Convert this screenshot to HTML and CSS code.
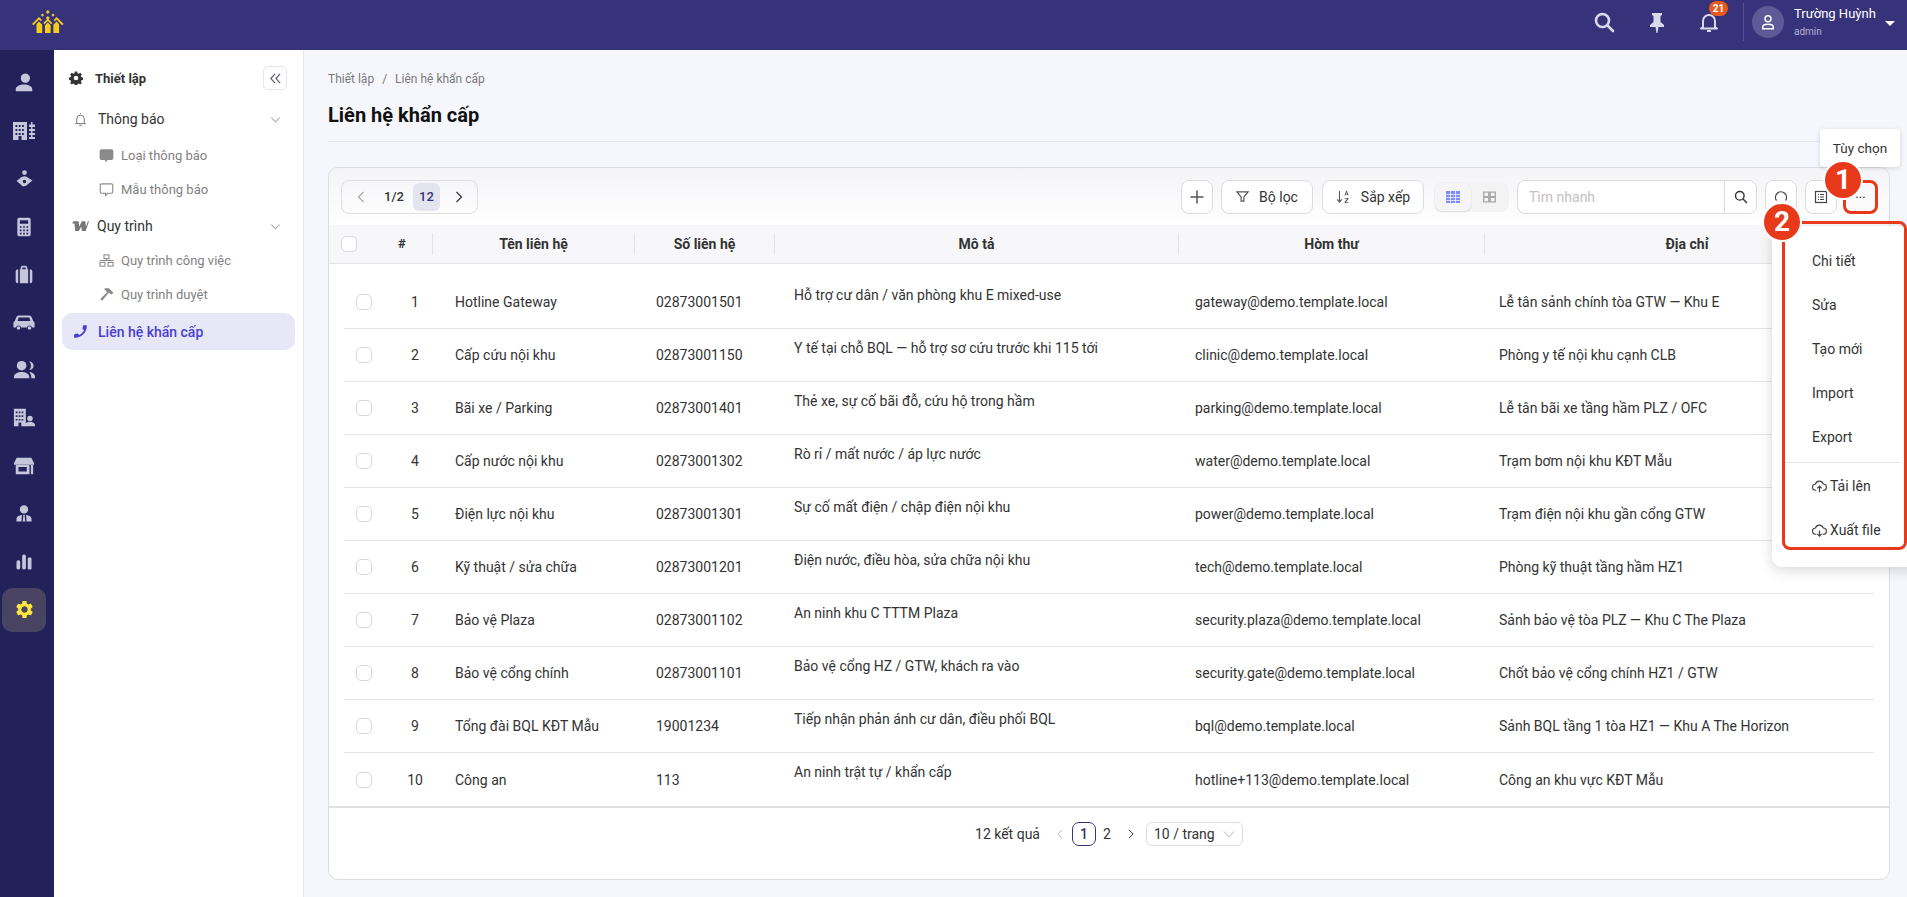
FILE: index.html
```html
<!DOCTYPE html>
<html lang="vi">
<head>
    <meta charset="UTF-8">
    <meta name="viewport" content="width=device-width, initial-scale=1.0">
    <title>Liên hệ khẩn cấp</title>
    <link rel="stylesheet" href="styles.css">
</head>
<body>

<header class="topbar">
    <svg class="logo" viewBox="0 0 32 24" width="32" height="24" fill="#f6cc1c">
        <path d="M15.800 0l2 2-2 2-2-2zM10.500 3.500l1.600 1.600-1.600 1.600-1.600-1.600zM21 3.500l1.600 1.600L21 6.700l-1.600-1.600zM15.800 6l2 2-2 2-2-2z"/>
        <path d="M0 14L7 7l3 3-1.200 1.200L7 9.500 1.500 15.200zM31.600 14l-7-7-3 3 1.200 1.200 1.800-1.700 5.500 5.700zM15.800 8.500l-4.500 4.500 1.200 1.200 3.300-3.200 3.300 3.200 1.200-1.200z"/>
        <path d="M7 11.500l3.200 3.200V23H4.500v-8.800zM24.600 11.500l2.500 2.700V23h-5.700v-8.300zM15.800 12.500l2.800 2.800V23h-5.600v-7.700z"/>
    </svg>
    <div class="topbar-right">
        <svg class="top-icon top-search" viewBox="0 0 24 24" width="24" height="24" fill="none" stroke="#d9d9ea" stroke-width="2.600"><circle cx="10.500" cy="10.500" r="6.500"/><path d="M15.500 15.500L21 21" stroke-linecap="round"/></svg>
        <svg class="top-icon" viewBox="0 0 24 24" width="24" height="24" fill="#d9d9ea"><path d="M7 3h10v2l-1.500 1v6l3.500 3v2h-5.500l-1 6h-1l-1-6H5v-2l3.500-3V6L7 5z"/></svg>
        <div class="bell">
            <svg viewBox="0 0 24 24" width="24" height="24" fill="none" stroke="#d9d9ea" stroke-width="2"><path d="M6 17V11a6 6 0 0 1 12 0v6l2 1.500H4zM10 21h4" stroke-linejoin="round"/></svg>
            <span class="bell-count">21</span>
        </div>
        <div class="top-divider"></div>
        <div class="avatar">
            <svg viewBox="0 0 24 24" width="18" height="18" fill="none" stroke="#fff" stroke-width="2"><circle cx="12" cy="7.500" r="4"/><path d="M5 21v-2.500c0-2 2-3.500 7-3.500s7 1.500 7 3.500V21z"/></svg>
        </div>
        <div class="user">
            <div class="user-name">Trường Huỳnh</div>
            <div class="user-role">admin</div>
        </div>
        <span class="user-caret"></span>
    </div>
</header>

<div class="layout">
    <nav class="rail">
        <div class="rail-item"><svg viewBox="0 0 24 24" width="22" height="22"><path d="M12 11.500a5 5 0 1 0 0-9.500 5 5 0 0 0 0 9.500zM12 13.500c-4.500 0-9 2-9 5V21h18v-2.500c0-3-4.500-5-9-5z"/></svg></div>
        <div class="rail-item"><svg viewBox="0 0 24 24" width="24" height="24"><path fill-rule="evenodd" d="M1 3h14v18H9.500v-4h-3v4H1zM3.500 6v2h1.800V6zm3.300 0v2h1.800V6zm3.200 0v2h1.800V6zM3.500 10v2h1.800v-2zm3.300 0v2h1.800v-2zm3.200 0v2h1.800v-2zM3.500 14v2h1.800v-2zm3.300 0v2h1.800v-2zm3.200 0v2h1.800v-2z"/><path d="M19 3h1.500v2.500h2.500V8h-2.500v2H23v2h-2.500v2H23v2h-2.500v2H23v2h-6v-2h2v-2h-2v-2h2v-2h-2v-2h2V8h-2V5.500h2z"/></svg></div>
        <div class="rail-item"><svg viewBox="0 0 24 24" width="19" height="19"><circle cx="12" cy="4.500" r="3"/><path fill-rule="evenodd" d="M12 9c2 0 3.500 1 4.500 2L22 14.500 14 21l-4 1-8-7 5-4c1-1 3-2 5-2zm0 4.500a2.200 2.200 0 1 0 0 4.400 2.200 2.200 0 0 0 0-4.400z"/></svg></div>
        <div class="rail-item"><svg viewBox="0 0 24 24" width="20" height="20"><path fill-rule="evenodd" d="M6 1h12a2 2 0 0 1 2 2v18a2 2 0 0 1-2 2H6a2 2 0 0 1-2-2V3a2 2 0 0 1 2-2zm1 3v4h10V4zm0 7v2h2v-2zm4 0v2h2v-2zm4 0v2h2v-2zm-8 4v2h2v-2zm4 0v2h2v-2zm4 0v2h2v-2zm-8 4v2h2v-2zm4 0v2h2v-2zm4 0v2h2v-2z"/></svg></div>
        <div class="rail-item"><svg viewBox="0 0 24 24" width="20" height="20"><path fill-rule="evenodd" d="M8 5V3.500A2.500 2.500 0 0 1 10.500 1h3A2.500 2.500 0 0 1 16 3.500V5h1v17H7V5zm2 0h4V3.500a.5.5 0 0 0-.5-.5h-3a.5.5 0 0 0-.5.500zM2 8a3 3 0 0 1 3-3v17a3 3 0 0 1-3-3zM19 5a3 3 0 0 1 3 3v11a3 3 0 0 1-3 3z"/></svg></div>
        <div class="rail-item"><svg viewBox="0 0 24 24" width="22" height="22"><path fill-rule="evenodd" d="M6 5h12c1 0 2 1 2.500 2l1.500 4c1 .5 1.500 1.500 1.500 2.500V18h-2.600a3 3 0 0 0-5.800 0H8.900a3 3 0 0 0-5.800 0H.5v-4.500c0-1 .5-2 1.500-2.500l1.500-4C4 6 5 5 6 5zm.2 2.200L5 11h14l-1.200-3.800z"/><circle cx="6" cy="18.500" r="2"/><circle cx="18" cy="18.500" r="2"/></svg></div>
        <div class="rail-item"><svg viewBox="0 0 24 24" width="23" height="23"><circle cx="9" cy="7" r="5"/><path d="M17 2.500a4.500 4.500 0 0 1 0 9 6.500 6.500 0 0 0 0-9zM9 13.500c-4 0-8 2-8 5V20h16v-1.500c0-3-4-5-8-5zM17 13.500c4 .5 6 2.500 6 5V20h-4v-2c0-1.500-1-3-2-4.500z"/></svg></div>
        <div class="rail-item"><svg viewBox="0 0 24 24" width="22" height="22"><path fill-rule="evenodd" d="M1 2h13v19H9v-4H6v4H1zM3 5v1.800h1.800V5zm3.200 0v1.800H8V5zm3.200 0v1.800h1.800V5zM3 9v1.800h1.800V9zm3.200 0v1.800H8V9zm3.200 0v1.800h1.800V9zM3 13v1.800h1.800V13zm3.200 0v1.800H8V13zm3.200 0v1.800h1.800V13z"/><circle cx="18.500" cy="12.500" r="3"/><path d="M13 21v-1.500c0-2 2.500-3.500 5.500-3.500s5.500 1.500 5.500 3.500V21z"/></svg></div>
        <div class="rail-item"><svg viewBox="0 0 24 24" width="22" height="22"><path fill-rule="evenodd" d="M4 3h16l3 6v1.500H1V9zM3 11h15v10H3zm3 2v5h9v-5zM19.500 11H22v10h-2.500z"/></svg></div>
        <div class="rail-item"><svg viewBox="0 0 24 24" width="20" height="20"><circle cx="12" cy="6.500" r="5"/><path d="M10.800 13h2.400l-.4 2 .8 6h-3.200l.8-6zM9.500 13.200L9 21H3v-3.500c0-2 2.500-3.800 6.500-4.300zM14.500 13.200c4 .5 6.500 2.300 6.500 4.300V21h-6z"/></svg></div>
        <div class="rail-item"><svg viewBox="0 0 24 24" width="20" height="20"><rect x="3" y="10" width="4.500" height="11" rx="2"/><rect x="9.800" y="3" width="4.500" height="18" rx="2"/><rect x="16.500" y="6.500" width="4.500" height="14.500" rx="1.500"/></svg></div>
        <div class="rail-item rail-item-active"><svg viewBox="0 0 24 24" width="21" height="21"><path d="M19.140 12.940c.04-.3.060-.610.060-.940 0-.320-.020-.640-.070-.940l2.030-1.580c.18-.14.230-.410.120-.610l-1.920-3.320c-.12-.220-.370-.290-.590-.220l-2.390.960c-.5-.380-1.030-.7-1.620-.940l-.360-2.540c-.040-.240-.240-.410-.480-.410h-3.840c-.240 0-.430.170-.470.410l-.360 2.540c-.590.240-1.130.570-1.620.940l-2.390-.960c-.220-.080-.470 0-.590.220L2.740 8.870c-.120.210-.080.470.120.610l2.030 1.580c-.050.3-.090.630-.090.940s.020.640.070.940l-2.030 1.580c-.18.140-.230.410-.12.610l1.920 3.320c.12.220.370.290.590.220l2.390-.960c.5.380 1.030.7 1.620.940l.360 2.540c.050.240.240.410.480.410h3.840c.240 0 .440-.17.470-.41l.360-2.540c.590-.240 1.130-.560 1.620-.940l2.390.960c.220.080.470 0 .590-.220l1.920-3.320c.12-.220.070-.470-.12-.61l-2.010-1.580zM12 15.600c-1.980 0-3.600-1.620-3.600-3.600s1.620-3.600 3.600-3.600 3.600 1.620 3.600 3.600-1.620 3.600-3.600 3.600z"/></svg></div>
    </nav>

    <aside class="sidebar">
        <div class="side-head">
            <svg viewBox="0 0 24 24" width="14" height="14" fill="#333"><path fill-rule="evenodd" d="M10 1h4l.6 3 2 .9 2.600-1.700 2.800 2.800-1.700 2.600.9 2 3 .6v4l-3 .6-.9 2 1.700 2.600-2.800 2.800-2.600-1.700-2 .9-.6 3h-4l-.6-3-2-.9-2.600 1.700-2.800-2.800 1.700-2.600-.9-2-3-.6v-4l3-.6.9-2-1.700-2.600 2.800-2.800 2.600 1.700 2-.9zm2 7a4 4 0 1 0 0 8 4 4 0 0 0 0-8z"/></svg>
            <span class="side-title">Thiết lập</span>
            <button class="collapse-btn">
                <svg viewBox="0 0 14 14" width="13" height="13" fill="none" stroke="#5d5d7a" stroke-width="1.300"><path d="M6.500 2L2 7l4.500 5M12 2L7.500 7l4.500 5"/></svg>
            </button>
        </div>

        <div class="side-group">
            <svg viewBox="0 0 24 24" width="15" height="15" fill="none" stroke="#777" stroke-width="1.600"><path d="M6 17v-6a6 6 0 0 1 12 0v6l2 1.500H4zM10 21.500h4M12 3V1.500"/></svg>
            <span>Thông báo</span>
            <svg class="chev" viewBox="0 0 12 12" width="11" height="11" fill="none" stroke="#a8a8a8" stroke-width="1.100"><path d="M1.500 4l4.500 4.500L10.500 4"/></svg>
        </div>
        <div class="side-sub side-sub-first">
            <svg viewBox="0 0 24 24" width="15" height="15" fill="#8a8a8a"><path d="M4 2h16a3 3 0 0 1 3 3v11a3 3 0 0 1-3 3h-6l-4 4v-4H4a3 3 0 0 1-3-3V5a3 3 0 0 1 3-3z"/></svg>
            <span>Loại thông báo</span>
        </div>
        <div class="side-sub">
            <svg viewBox="0 0 24 24" width="15" height="15" fill="none" stroke="#8a8a8a" stroke-width="1.800"><path d="M4 3h16a2 2 0 0 1 2 2v11a2 2 0 0 1-2 2h-6l-3.500 3.500V18H4a2 2 0 0 1-2-2V5a2 2 0 0 1 2-2z"/></svg>
            <span>Mẫu thông báo</span>
        </div>

        <div class="side-group side-group-next">
            <svg viewBox="0 0 24 16" width="18" height="12" fill="#777"><path d="M3 1.500h7l1 7 3.500-7H19l1 7 2.500-7H24l-4.500 13h-5l-.8-6-3.200 6H5.500L4.700 4.500H1.500z"/></svg>
            <span>Quy trình</span>
            <svg class="chev" viewBox="0 0 12 12" width="11" height="11" fill="none" stroke="#a8a8a8" stroke-width="1.100"><path d="M1.500 4l4.500 4.500L10.500 4"/></svg>
        </div>
        <div class="side-sub side-sub-second">
            <svg viewBox="0 0 24 24" width="15" height="15" fill="none" stroke="#8a8a8a" stroke-width="1.700"><rect x="8" y="3" width="8" height="6"/><rect x="1.500" y="15" width="8" height="6"/><rect x="14.500" y="15" width="8" height="6"/><path d="M12 9v3M1 12h22"/></svg>
            <span>Quy trình công việc</span>
        </div>
        <div class="side-sub">
            <svg viewBox="0 0 24 24" width="15" height="15" fill="#8a8a8a"><path d="M9 2h7l7 7-3 3-4-3-2 2L5 22l-3-3L13 8.500 9 4z"/></svg>
            <span>Quy trình duyệt</span>
        </div>

        <div class="side-active">
            <svg viewBox="0 0 24 24" width="17" height="17" fill="#4a3fd0"><path transform="matrix(-1 0 0 1 24 0)" d="M20.010 15.380c-1.230 0-2.420-.2-3.530-.560a.977.977 0 0 0-1.010.240l-1.570 1.970c-2.830-1.350-5.480-3.900-6.890-6.830l1.950-1.660c.27-.280.350-.670.240-1.020-.370-1.110-.560-2.300-.560-3.530 0-.540-.450-.990-.990-.990H4.190C3.650 3 3 3.240 3 3.990 3 13.280 10.730 21 20.010 21c.71 0 .990-.630.990-1.180v-3.450c0-.540-.450-.990-.990-.990z"/></svg>
            <span>Liên hệ khẩn cấp</span>
        </div>
    </aside>

    <main class="content">
        <div class="breadcrumb">
            <span>Thiết lập</span><span class="crumb-sep">/</span><span>Liên hệ khẩn cấp</span>
        </div>
        <h1 class="page-title">Liên hệ khẩn cấp</h1>

        <section class="card">
            <div class="toolbar">
                <div class="pager-box">
                    <svg viewBox="0 0 12 12" width="12" height="12" fill="none" stroke="#aaa" stroke-width="1.200"><path d="M8.500 1L3.500 6l5 5"/></svg>
                    <span class="pager-count">1/2</span>
                    <span class="pager-total">12</span>
                    <svg viewBox="0 0 12 12" width="12" height="12" fill="none" stroke="#333" stroke-width="1.200"><path d="M3.500 1l5 5-5 5"/></svg>
                </div>

                <div class="tools">
                    <button class="tool-btn tool-square">
                        <svg viewBox="0 0 14 14" width="14" height="14" fill="none" stroke="#555" stroke-width="1.500"><path d="M7 .5v13M.5 7h13"/></svg>
                    </button>
                    <button class="tool-btn tool-filter">
                        <svg viewBox="0 0 14 14" width="13" height="13" fill="none" stroke="#555" stroke-width="1.300"><path d="M1 2h12L8.500 7.500V12h-3V7.500z"/></svg>
                        <span>Bộ lọc</span>
                    </button>
                    <button class="tool-btn tool-sort">
                        <svg viewBox="0 0 14 14" width="14" height="14" fill="#555"><path d="M3 1h1v9.500l1.500-1.500.7.700L3.500 13 .8 9.700 1.500 9 3 10.500zM8.500 5.500L10 1h1l1.500 4.500h-1l-.3-1H9.800l-.3 1zM10 3.700h1L10.500 2zM8.700 8h3.800v.8l-2.600 3.400h2.600v.8H8.500v-.8l2.600-3.400H8.700z"/></svg>
                        <span>Sắp xếp</span>
                    </button>
                    <div class="view-toggle">
                        <span class="view-on">
                            <svg viewBox="0 0 14 12" width="14" height="12"><rect width="14" height="12" fill="#7d8df5"/><path d="M0 3.500h14M0 6.500h14M0 9.500h14M4.500 0v12M9.500 0v12" stroke="#fff" stroke-width=".7"/></svg>
                        </span>
                        <span class="view-off">
                            <svg viewBox="0 0 14 12" width="13" height="12" fill="#aaa"><path fill-rule="evenodd" d="M0 0h14v12H0zm1.500 1.500v3.500h4V1.500zm7 0v3.500h4V1.500zm-7 5.500v3.500h4V7zm7 0v3.500h4V7z"/></svg>
                        </span>
                    </div>
                    <div class="quick-search">
                        <span class="quick-input">Tìm nhanh</span>
                        <span class="quick-btn">
                            <svg viewBox="0 0 14 14" width="14" height="14" fill="none" stroke="#333" stroke-width="1.400"><circle cx="5.800" cy="5.800" r="4.300"/><path d="M9 9l4 4"/></svg>
                        </span>
                    </div>
                    <button class="tool-btn tool-square">
                        <svg viewBox="0 0 14 14" width="14" height="14" fill="none" stroke="#444" stroke-width="1.300"><path d="M2.500 10.500A5.500 5.500 0 1 1 11.500 10.500"/></svg>
                    </button>
                    <button class="tool-btn tool-square">
                        <svg viewBox="0 0 14 14" width="14" height="14" fill="none" stroke="#444" stroke-width="1.200"><rect x="1.500" y="1.500" width="11" height="11"/><path d="M4 4.500h1M6 4.500h4M4 7h1M6 7h4M4 9.500h1M6 9.500h4"/></svg>
                    </button>
                    <button class="tool-btn tool-more">...</button>
                </div>
            </div>

            <div class="thead">
                <div class="th th-check"><span class="check"></span><span class="th-hash">#</span></div>
                <div class="th">Tên liên hệ</div>
                <div class="th">Số liên hệ</div>
                <div class="th">Mô tả</div>
                <div class="th">Hòm thư</div>
                <div class="th">Địa chỉ</div>
            </div>

            <div class="tbody">
                <div class="tr">
                    <div class="td-check"><span class="check"></span><span class="td-no">1</span></div>
                    <div class="td">Hotline Gateway</div>
                    <div class="td">02873001501</div>
                    <div class="td td-desc">Hỗ trợ cư dân / văn phòng khu E mixed-use</div>
                    <div class="td">gateway@demo.template.local</div>
                    <div class="td">Lễ tân sảnh chính tòa GTW — Khu E</div>
                </div>
                <div class="tr">
                    <div class="td-check"><span class="check"></span><span class="td-no">2</span></div>
                    <div class="td">Cấp cứu nội khu</div>
                    <div class="td">02873001150</div>
                    <div class="td td-desc">Y tế tại chỗ BQL — hỗ trợ sơ cứu trước khi 115 tới</div>
                    <div class="td">clinic@demo.template.local</div>
                    <div class="td">Phòng y tế nội khu cạnh CLB</div>
                </div>
                <div class="tr">
                    <div class="td-check"><span class="check"></span><span class="td-no">3</span></div>
                    <div class="td">Bãi xe / Parking</div>
                    <div class="td">02873001401</div>
                    <div class="td td-desc">Thẻ xe, sự cố bãi đỗ, cứu hộ trong hầm</div>
                    <div class="td">parking@demo.template.local</div>
                    <div class="td">Lễ tân bãi xe tầng hầm PLZ / OFC</div>
                </div>
                <div class="tr">
                    <div class="td-check"><span class="check"></span><span class="td-no">4</span></div>
                    <div class="td">Cấp nước nội khu</div>
                    <div class="td">02873001302</div>
                    <div class="td td-desc">Rò rỉ / mất nước / áp lực nước</div>
                    <div class="td">water@demo.template.local</div>
                    <div class="td">Trạm bơm nội khu KĐT Mẫu</div>
                </div>
                <div class="tr">
                    <div class="td-check"><span class="check"></span><span class="td-no">5</span></div>
                    <div class="td">Điện lực nội khu</div>
                    <div class="td">02873001301</div>
                    <div class="td td-desc">Sự cố mất điện / chập điện nội khu</div>
                    <div class="td">power@demo.template.local</div>
                    <div class="td">Trạm điện nội khu gần cổng GTW</div>
                </div>
                <div class="tr">
                    <div class="td-check"><span class="check"></span><span class="td-no">6</span></div>
                    <div class="td">Kỹ thuật / sửa chữa</div>
                    <div class="td">02873001201</div>
                    <div class="td td-desc">Điện nước, điều hòa, sửa chữa nội khu</div>
                    <div class="td">tech@demo.template.local</div>
                    <div class="td">Phòng kỹ thuật tầng hầm HZ1</div>
                </div>
                <div class="tr">
                    <div class="td-check"><span class="check"></span><span class="td-no">7</span></div>
                    <div class="td">Bảo vệ Plaza</div>
                    <div class="td">02873001102</div>
                    <div class="td td-desc">An ninh khu C TTTM Plaza</div>
                    <div class="td">security.plaza@demo.template.local</div>
                    <div class="td">Sảnh bảo vệ tòa PLZ — Khu C The Plaza</div>
                </div>
                <div class="tr">
                    <div class="td-check"><span class="check"></span><span class="td-no">8</span></div>
                    <div class="td">Bảo vệ cổng chính</div>
                    <div class="td">02873001101</div>
                    <div class="td td-desc">Bảo vệ cổng HZ / GTW, khách ra vào</div>
                    <div class="td">security.gate@demo.template.local</div>
                    <div class="td">Chốt bảo vệ cổng chính HZ1 / GTW</div>
                </div>
                <div class="tr">
                    <div class="td-check"><span class="check"></span><span class="td-no">9</span></div>
                    <div class="td">Tổng đài BQL KĐT Mẫu</div>
                    <div class="td">19001234</div>
                    <div class="td td-desc">Tiếp nhận phản ánh cư dân, điều phối BQL</div>
                    <div class="td">bql@demo.template.local</div>
                    <div class="td">Sảnh BQL tầng 1 tòa HZ1 — Khu A The Horizon</div>
                </div>
                <div class="tr">
                    <div class="td-check"><span class="check"></span><span class="td-no">10</span></div>
                    <div class="td">Công an</div>
                    <div class="td">113</div>
                    <div class="td td-desc">An ninh trật tự / khẩn cấp</div>
                    <div class="td">hotline+113@demo.template.local</div>
                    <div class="td">Công an khu vực KĐT Mẫu</div>
                </div>
            </div>

            <div class="pagination">
                <span class="page-total">12 kết quả</span>
                <svg viewBox="0 0 12 12" width="10" height="10" fill="none" stroke="#bbb" stroke-width="1.200"><path d="M8.500 1L3.500 6l5 5"/></svg>
                <span class="page-num page-num-on">1</span>
                <span class="page-num page-num-two">2</span>
                <svg class="page-next" viewBox="0 0 12 12" width="10" height="10" fill="none" stroke="#333" stroke-width="1.200"><path d="M3.500 1l5 5-5 5"/></svg>
                <span class="page-size">10 / trang
                    <svg viewBox="0 0 12 12" width="12" height="12" fill="none" stroke="#bbb" stroke-width="1"><path d="M1 3.500l5 5.500 5-5.500"/></svg>
                </span>
            </div>
        </section>
    </main>
</div>

<!-- tooltip, menu va chu thich nam de len bang -->
<div class="tooltip">Tùy chọn</div>

<div class="menu">
    <div class="menu-item">Chi tiết</div>
    <div class="menu-item">Sửa</div>
    <div class="menu-item">Tạo mới</div>
    <div class="menu-item">Import</div>
    <div class="menu-item">Export</div>
    <div class="menu-line"></div>
    <div class="menu-item menu-item-icon">
        <svg viewBox="0 0 24 24" width="15" height="15" fill="none" stroke="#444" stroke-width="1.900"><path d="M7 18H6a5 5 0 0 1-.5-10A6.500 6.500 0 0 1 18 8a5 5 0 0 1 0 10h-1M12 21v-9M8.500 15l3.500-3.500 3.500 3.500"/></svg>
        <span>Tải lên</span>
    </div>
    <div class="menu-item menu-item-icon">
        <svg viewBox="0 0 24 24" width="15" height="15" fill="none" stroke="#444" stroke-width="1.900"><path d="M7 18H6a5 5 0 0 1-.5-10A6.500 6.500 0 0 1 18 8a5 5 0 0 1 0 10h-1M12 12v9M8.500 17.500l3.500 3.500 3.500-3.500"/></svg>
        <span>Xuất file</span>
    </div>
</div>

<div class="mark mark-more"></div>
<div class="mark mark-menu"></div>
<div class="step step-one">1</div>
<div class="step step-two">2</div>

</body>
</html>
```

FILE: styles.css
```css
* {
    box-sizing: border-box;
}
html,
body {
    height: 100%;
}
body {
    margin: 0;
    position: relative;
    overflow: hidden;
    font-family: Roboto, "Liberation Sans", sans-serif;
    font-size: 14px;
    color: #333;
    background-color: #f6f7fc;
}
button {
    font-family: inherit;
    font-size: 14px;
    color: #333;
    cursor: pointer;
}

/* thanh tren cung */
.topbar {
    height: 50px;
    display: flex;
    align-items: center;
    padding-left: 32px;
    background-color: #37337b;
}
.logo {
    margin-top: -6px;
}
.topbar-right {
    margin-left: auto;
    display: flex;
    align-items: center;
    height: 100%;
    padding-right: 12px;
}
.top-icon {
    margin-right: 28px;
    margin-top: -7px;
}
.top-search {
    margin-right: 29px;
}
.bell {
    position: relative;
    height: 24px;
    margin-top: -7px;
    margin-right: 22px;
}
.bell-count {
    position: absolute;
    top: -9px;
    left: 12px;
    width: 19px;
    height: 15px;
    border-radius: 8px;
    background-color: #e8591e;
    color: #fff;
    font-size: 10px;
    font-weight: 700;
    line-height: 15px;
    text-align: center;
}
.top-divider {
    width: 1px;
    height: 38px;
    margin-top: -6px;
    margin-right: 8px;
    background-color: #56528f;
}
.avatar {
    width: 32px;
    height: 32px;
    margin-top: -6px;
    margin-right: 10px;
    border-radius: 50%;
    background-color: #5d5a97;
    display: flex;
    align-items: center;
    justify-content: center;
}
.user {
    width: 91px;
    margin-top: -6px;
}
.user-name {
    color: #fff;
    font-size: 13px;
    line-height: 14px;
}
.user-role {
    margin-top: 5px;
    color: #b4b2d2;
    font-size: 10px;
    line-height: 12px;
}
.user-caret {
    margin-top: -4px;
    border-left: 5px solid transparent;
    border-right: 5px solid transparent;
    border-top: 5px solid #fff;
}

/* khung chinh */
.layout {
    display: flex;
    height: 847px;
}
.rail {
    width: 54px;
    flex: none;
    padding-top: 11px;
    background-color: #23215a;
}
.rail-item {
    width: 44px;
    height: 44px;
    margin: 0 0 3.900px 2px;
    display: flex;
    align-items: center;
    justify-content: center;
    border-radius: 10px;
    fill: #c6c6db;
}
.rail-item-active {
    background-color: #474360;
    fill: #fbe73f;
}

/* cot menu */
.sidebar {
    width: 250px;
    flex: none;
    padding: 16px 8px 0;
    background-color: #fff;
    border-right: 1px solid #e8e8ef;
}
.side-head {
    display: flex;
    align-items: center;
    height: 24px;
    padding-left: 7px;
    padding-right: 8px;
}
.side-title {
    margin-left: 12px;
    font-size: 13px;
    font-weight: 700;
    color: #333;
}
.collapse-btn {
    margin-left: auto;
    width: 24px;
    height: 24px;
    padding: 0;
    display: flex;
    align-items: center;
    justify-content: center;
    background-color: #fff;
    border: 1px solid #e6e6ea;
    border-radius: 5px;
}
.side-group {
    display: flex;
    align-items: center;
    gap: 10px;
    height: 24px;
    margin-top: 17px;
    padding-left: 10px;
    padding-right: 14px;
    color: #333;
}
.side-group svg:first-child {
    margin-left: 1px;
}
.side-group-next {
    margin-top: 8px;
    gap: 8px;
}
.side-group-next svg:first-child {
    margin-left: -1px;
}
.chev {
    margin-left: auto;
}
.side-sub {
    display: flex;
    align-items: center;
    gap: 7px;
    height: 34px;
    padding-left: 37px;
    font-size: 13px;
    color: #7f7f7f;
}
.side-sub-first {
    margin-top: 7px;
}
.side-sub-second {
    margin-top: 5px;
}
.side-active {
    display: flex;
    align-items: center;
    gap: 9px;
    height: 37px;
    margin-top: 2px;
    padding-left: 10px;
    border-radius: 10px;
    background-color: #e7e7f8;
    color: #4a3fd0;
    font-weight: 500;
}

/* noi dung */
.content {
    flex: 1;
    min-width: 0;
    padding: 22px 17px 0 24px;
}
.breadcrumb {
    height: 14px;
    font-size: 12px;
    line-height: 14px;
    color: #7a7a7a;
}
.crumb-sep {
    margin: 0 8px;
}
.page-title {
    margin: 16px 0 0;
    height: 40px;
    font-size: 20px;
    font-weight: 700;
    line-height: 26px;
    color: #111;
    border-bottom: 1px solid #e5e5ec;
}
.card {
    height: 713px;
    margin-top: 25px;
    background-color: #fff;
    border: 1px solid #dcdce2;
    border-radius: 10px;
}
.toolbar {
    display: flex;
    align-items: center;
    height: 57px;
    padding: 0 11px 0 12px;
    border-radius: 10px 10px 0 0;
    background: linear-gradient(to bottom, #f4f4f7, #fff);
}
.pager-box {
    display: flex;
    align-items: center;
    width: 137px;
    height: 34px;
    padding-left: 13px;
    border: 1px solid #dedee3;
    border-radius: 8px;
}
.pager-count {
    margin-left: 17px;
    width: 29px;
    font-size: 13px;
    font-weight: 500;
    color: #333;
}
.pager-total {
    width: 27px;
    height: 28px;
    margin-right: 13px;
    border-radius: 6px;
    background-color: #e3e4ee;
    color: #37337b;
    font-size: 13px;
    font-weight: 500;
    line-height: 28px;
    text-align: center;
}
.tools {
    margin-left: auto;
    display: flex;
    align-items: center;
    gap: 8px;
}
.tool-btn {
    display: flex;
    align-items: center;
    justify-content: center;
    height: 34px;
    padding: 0;
    background-color: #fff;
    border: 1px solid #dcdcdf;
    border-radius: 8px;
}
.tool-square {
    width: 32px;
}
.tool-filter {
    width: 92px;
    gap: 10px;
    margin-right: 1px;
}
.tool-sort {
    width: 102px;
    gap: 11px;
    margin-right: 2px;
}
.tool-more {
    width: 35px;
    margin-left: -2px;
    border: 0;
    background: transparent;
    font-size: 13px;
    line-height: 20px;
    padding-bottom: 6px;
}
.view-toggle {
    display: flex;
    width: 75px;
    height: 30px;
    padding: 1px;
    border-radius: 8px;
    background-color: #f3f3f3;
}
.view-on,
.view-off {
    display: flex;
    align-items: center;
    justify-content: center;
    width: 36px;
    height: 28px;
    border-radius: 7px;
}
.view-on {
    background-color: #f5f5f7;
    box-shadow: 0 1px 2px rgba(0, 0, 0, 0.1);
}
.quick-search {
    display: flex;
    width: 240px;
    height: 34px;
    background-color: #fff;
    border: 1px solid #dcdcdf;
    border-radius: 8px;
}
.quick-input {
    flex: 1;
    padding-left: 11px;
    color: #c2c2c2;
    line-height: 32px;
}
.quick-btn {
    display: flex;
    align-items: center;
    justify-content: center;
    width: 32px;
    border-left: 1px solid #dcdcdf;
}

/* bang */
.thead {
    display: grid;
    grid-template-columns: 104px 202px 140px 404px 306px 1fr;
    height: 39px;
    border-bottom: 1px solid #e4e4e8;
    background-color: #f7f7fa;
    align-items: center;
}
.th {
    height: 22px;
    line-height: 22px;
    text-align: center;
    font-weight: 700;
    font-size: 14px;
    color: #333;
    border-right: 1px solid #e4e4e8;
}
.th:last-child {
    border-right: 0;
}
.th-check {
    display: flex;
    align-items: center;
    padding-left: 12px;
}
.th-hash {
    margin-left: 41px;
    font-size: 13px;
}
.check {
    display: block;
    flex: none;
    width: 16px;
    height: 16px;
    background-color: #fff;
    border: 1px solid #d9d9d9;
    border-radius: 5px;
}
.tbody {
    padding: 12px 15px 0;
}
.tr {
    display: grid;
    grid-template-columns: 90px 201px 140px 399px 304px 1fr;
    align-items: center;
    height: 53px;
    border-bottom: 1px solid #e6e6e9;
}
.tr:last-child {
    border-bottom: 0;
}
.td-check {
    display: flex;
    align-items: center;
    padding-left: 12px;
}
.td-no {
    width: 36px;
    margin-left: 25px;
    text-align: center;
}
.td {
    padding-left: 21px;
    white-space: nowrap;
}
.td-desc {
    padding-left: 19px;
    margin-top: -15px;
}

/* phan trang */
.pagination {
    display: flex;
    align-items: center;
    justify-content: center;
    height: 57px;
    padding-bottom: 3px;
    border-top: 2px solid #e0e0e3;
}
.page-total {
    margin-right: 15px;
}
.page-num {
    width: 24px;
    height: 24px;
    line-height: 22px;
    text-align: center;
    border: 1px solid transparent;
    border-radius: 7px;
}
.page-num-on {
    margin-left: 7px;
    border-color: #37337b;
    color: #37337b;
    font-weight: 500;
}
.page-num-two {
    margin-left: -1px;
}
.page-next {
    margin-left: 7px;
}
.page-size {
    display: flex;
    align-items: center;
    justify-content: space-between;
    width: 97px;
    height: 24px;
    margin-left: 10px;
    padding: 0 7px;
    border: 1px solid #dcdcdf;
    border-radius: 6px;
}

/* lop phu */
.tooltip {
    position: absolute;
    left: 1820px;
    top: 129px;
    width: 80px;
    height: 38px;
    background-color: #fff;
    border-radius: 4px;
    box-shadow: 0 1px 5px rgba(0, 0, 0, 0.15);
    font-size: 13.500px;
    line-height: 38px;
    text-align: center;
}
.menu {
    position: absolute;
    left: 1772px;
    top: 226px;
    width: 160px;
    height: 341px;
    padding-top: 13px;
    background-color: #fff;
    border-radius: 10px;
    box-shadow: 0 3px 14px rgba(0, 0, 0, 0.16);
}
.menu-item {
    height: 44px;
    padding-left: 40px;
    font-size: 14px;
    line-height: 44px;
    color: #333;
}
.menu-item-icon {
    display: flex;
    align-items: center;
    gap: 3px;
    padding-left: 40px;
}
.menu-line {
    width: 115px;
    height: 1px;
    margin: 3px 0 1px 13px;
    background-color: #e6e6e9;
}
.mark {
    position: absolute;
    border: 3px solid #e8391a;
    border-radius: 8px;
}
.mark-more {
    left: 1843px;
    top: 180px;
    width: 35px;
    height: 34px;
}
.mark-menu {
    left: 1782px;
    top: 221px;
    width: 125px;
    height: 329px;
}
.step {
    position: absolute;
    width: 40px;
    height: 40px;
    border: 2px solid #fff;
    border-radius: 50%;
    background-color: #e8391a;
    color: #fff;
    font-size: 28px;
    font-weight: 700;
    line-height: 36px;
    text-align: center;
}
.step-one {
    left: 1823px;
    top: 160px;
}
.step-two {
    left: 1762px;
    top: 202px;
}
```
